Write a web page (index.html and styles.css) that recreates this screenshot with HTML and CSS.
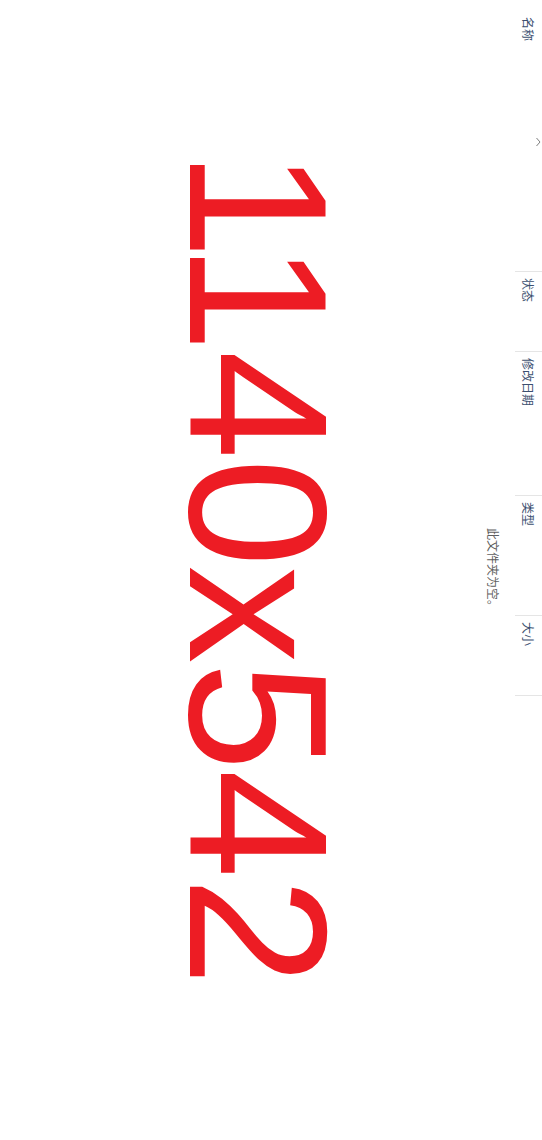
FILE: index.html
```html
<!DOCTYPE html>
<html lang="zh-CN">
<head>
<meta charset="utf-8">
<title>此文件夹为空</title>
<link rel="stylesheet" href="styles.css">
</head>
<body>
<div class="page">
  <div class="header">
    <div class="col col-name">名称
      <svg class="sort" width="7" height="10" viewBox="0 0 7 10"><path d="M1.5 1 L5 5 L1.5 9" fill="none" stroke="#808080" stroke-width="1"/></svg>
    </div>
    <div class="col col-status">状态</div>
    <div class="col col-date">修改日期</div>
    <div class="col col-type">类型</div>
    <div class="col col-size">大小</div>
  </div>
  <div class="empty">此文件夹为空。</div>
  <div class="placeholder">1140x542</div>
</div>
</body>
</html>
```
FILE: styles.css
```css
html, body {
  margin: 0;
  padding: 0;
  background: #ffffff;
}
body {
  overflow: hidden;
}
.page {
  writing-mode: vertical-rl;
  text-orientation: sideways;
  inline-size: 1140px;
  block-size: 542px;
  font-family: "Noto Sans CJK SC", "Microsoft YaHei", sans-serif;
  font-size: 12px;
}
.header {
  display: flex;
  block-size: 27px;
  padding-inline-start: 11px;
}
.col {
  position: relative;
  box-sizing: border-box;
  border-inline-end: 1px solid #e5e5e5;
  padding-inline-start: 6px;
  padding-block-start: 1px;
  line-height: 26px;
  color: #3c5070;
  white-space: nowrap;
}
.col-name { inline-size: 261px; }
.col-status { inline-size: 80px; }
.col-date { inline-size: 144px; }
.col-type { inline-size: 120px; }
.col-size { inline-size: 80px; }
.sort {
  position: absolute;
  top: 126px;
  right: 0;
  display: block;
}
.empty {
  margin-block-start: 14px;
  line-height: 16px;
  text-align: center;
  color: #5f5f5f;
}
.placeholder {
  margin-block-start: 130px;
  padding-inline-end: 6px;
  font-family: "Liberation Sans", Arial, sans-serif;
  font-size: 196px;
  line-height: 196px;
  letter-spacing: -1.5px;
  text-align: center;
  color: #ed1c24;
  white-space: nowrap;
}
```
